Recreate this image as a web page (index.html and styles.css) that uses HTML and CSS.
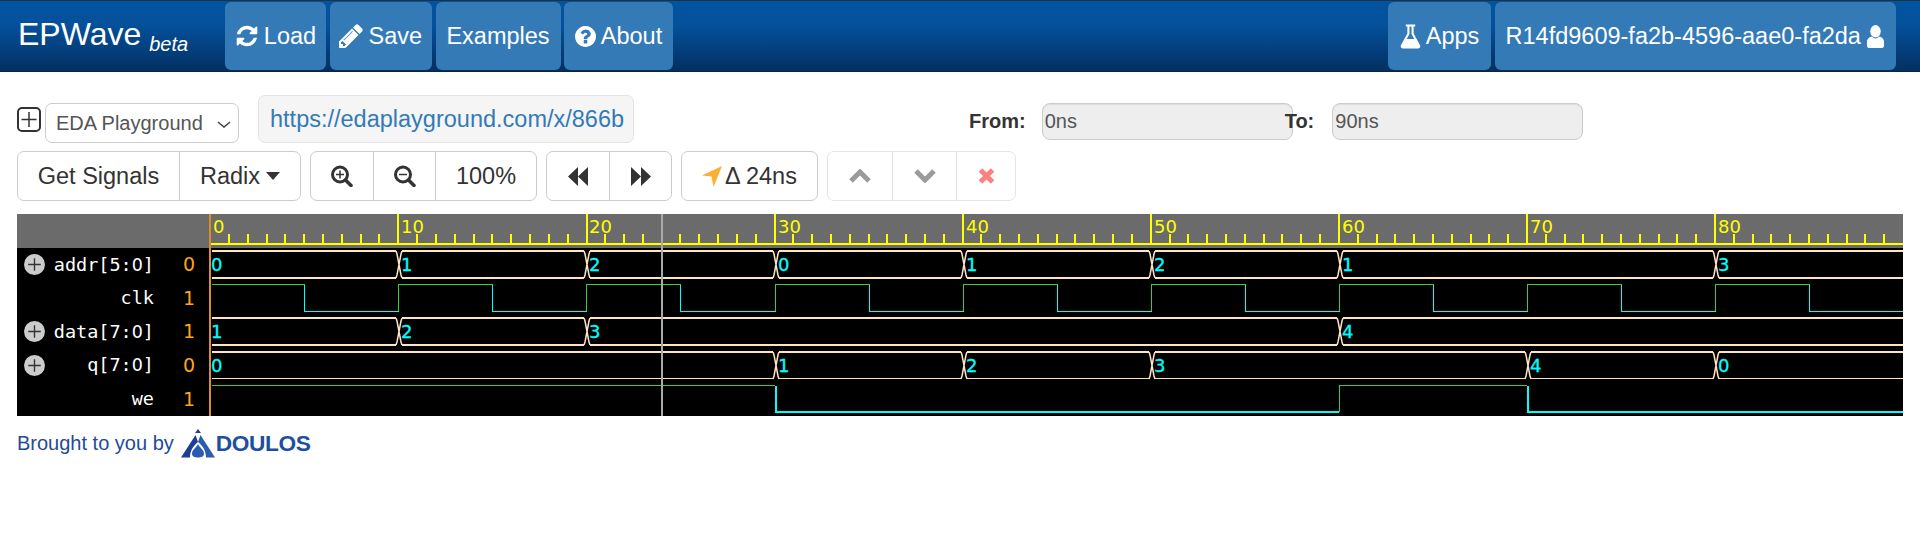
FILE: index.html
```html
<!DOCTYPE html>
<html lang="en">
<head>
<meta charset="utf-8">
<title>EPWave</title>
<link rel="stylesheet" href="styles.css">
</head>
<body>
<nav class="topbar">
  <div class="brand">EPWave <small>beta</small></div>
  <a class="nav-btn w-load"><svg class="ic-nav" viewBox="0 0 1792 1792"><path d="M1639 1056q0 5-1 7-64 268-268 434.5t-478 166.5q-146 0-282.5-55t-243.5-157l-129 129q-19 19-45 19t-45-19-19-45v-448q0-26 19-45t45-19h448q26 0 45 19t19 45-19 45l-137 137q71 66 161 102t187 36q134 0 250-65t186-179q11-17 53-117 8-23 30-23h192q13 0 22.5 9.5t9.5 22.5zm25-800v448q0 26-19 45t-45 19h-448q-26 0-45-19t-19-45 19-45l138-138q-148-137-349-137-134 0-250 65t-186 179q-11 17-53 117-8 23-30 23h-199q-13 0-22.5-9.5t-9.5-22.5v-7q65-268 270-434.5t480-166.5q146 0 284 55.5t245 156.5l130-129q19-19 45-19t45 19 19 45z"/></svg>Load</a>
  <a class="nav-btn w-save"><svg class="ic-nav" viewBox="0 0 1536 1536"><path d="M363 1408l91-91-235-235-91 91v107h128v128h107zm523-928q0-22-22-22-10 0-17 7l-542 542q-7 7-7 17 0 22 22 22 10 0 17-7l542-542q7-7 7-17zm-54-192l416 416-832 832h-416v-416zm683 96q0 53-37 90l-166 166-416-416 166-165q36-38 90-38 53 0 91 38l235 234q37 39 37 91z"/></svg>Save</a>
  <a class="nav-btn w-examples">Examples</a>
  <a class="nav-btn w-about"><svg class="ic-q" viewBox="128 128 1536 1536"><path d="M1024 1376v-192q0-14-9-23t-23-9h-192q-14 0-23 9t-9 23v192q0 14 9 23t23 9h192q14 0 23-9t9-23zm256-672q0-88-55.5-163t-138.5-116-170-41q-243 0-371 213-15 24 8 42l132 100q7 6 19 6 16 0 25-12 53-68 86-92 34-24 86-24 48 0 85.5 26t37.5 59q0 38-20 61t-68 45q-63 28-115.5 86.5t-52.5 125.5v36q0 14 9 23t23 9h192q14 0 23-9t9-23q0-19 21.5-49.5t54.5-49.5q32-18 49-28.5t46-35 44.5-48 28-60.5 12.5-81zm384 192q0 209-103 385.5t-279.5 279.5-385.5 103-385.5-103-279.5-279.5-103-385.5 103-385.5 279.5-279.5 385.5-103 385.5 103 279.5 279.5 103 385.5z"/></svg>About</a>
  <a class="nav-btn nav-right w-apps"><svg class="ic-flask" viewBox="0 0 20 24"><path fill-rule="evenodd" d="M5.500 .5h9v2h-1.500v6.500l6.200 11.500c.7 1.400-.1 3-1.700 3H2.500C.9 23.500 .1 21.900 .8 20.500L7 9V2.500H5.500zM9 2.500v7L6.400 14.500h7.200L11 9.500v-7z"/></svg>Apps</a>
  <a class="nav-btn w-user">R14fd9609-fa2b-4596-aae0-fa2da<svg class="ic-user" viewBox="0 0 20 24"><ellipse cx="10" cy="6.500" rx="5.500" ry="6.500"/><path d="M1 22v-4.500c0-3 2.500-5 5.500-5.500 1 1.300 2.200 2 3.500 2s2.500-.7 3.500-2c3 .5 5.500 2.500 5.500 5.500V22c0 1.100-.9 2-2 2H3c-1.100 0-2-.9-2-2z"/></svg></a>
</nav>

<main class="page">
  <div class="row-source">
    <svg class="ic-add" viewBox="0 0 24 25"><rect x="1" y="1" width="22" height="23" rx="4"/><path d="M12 5v15M4.500 12.500h15"/></svg>
    <div class="select-wrap">
      <select class="source-select"><option>EDA Playground</option></select>
      <svg class="select-chev" viewBox="0 0 14 7"><path d="M1 1l6 5 6-5"/></svg>
    </div>
    <div class="url-box"><a class="url-link">https://edaplayground.com/x/866b</a></div>
    <div class="range">
      <label class="range-label">From:</label>
      <input class="range-input" type="text" value="0ns" readonly>
      <label class="range-label range-to">To:</label>
      <input class="range-input" type="text" value="90ns" readonly>
    </div>
  </div>

  <div class="toolbar">
    <div class="btn-group">
      <button class="btn btn-text">Get Signals</button>
      <button class="btn btn-radix">Radix <svg class="ic-caret" viewBox="0 0 14 8"><path d="M0 0h14L7 8z"/></svg></button>
    </div>
    <div class="btn-group">
      <button class="btn btn-icon"><svg class="ic-zoom" viewBox="0 0 24 22"><circle cx="10" cy="9.500" r="7.500"/><path class="thin" d="M10 5.500v8M6 9.500h8"/><path class="handle" d="M15.500 15l5.500 5.500"/></svg></button>
      <button class="btn btn-icon"><svg class="ic-zoom" viewBox="0 0 24 22"><circle cx="10" cy="9.500" r="7.500"/><path class="thin" d="M6 9.500h8"/><path class="handle" d="M15.500 15l5.500 5.500"/></svg></button>
      <button class="btn btn-pct">100%</button>
    </div>
    <div class="btn-group">
      <button class="btn btn-icon"><svg class="ic-step" viewBox="0 0 20 19"><path d="M10 0v19L0 9.500zM20 0v19L10 9.500z"/></svg></button>
      <button class="btn btn-icon"><svg class="ic-step" viewBox="0 0 20 19"><path d="M0 0v19l10-9.500zM10 0v19l10-9.500z"/></svg></button>
    </div>
    <div class="btn-group">
      <button class="btn btn-delta"><svg class="ic-cursor" viewBox="0 0 19 20"><path d="M19 0L11 20 9 10 0 9z"/></svg>Δ 24ns</button>
    </div>
    <div class="btn-group is-disabled">
      <button class="btn btn-chev"><svg class="ic-chev" viewBox="0 0 22 14"><path d="M2 12l9-9 9 9"/></svg></button>
      <button class="btn btn-chev"><svg class="ic-chev" viewBox="0 0 22 14"><path d="M2 2l9 9 9-9"/></svg></button>
      <button class="btn btn-close"><svg class="ic-x" viewBox="0 0 17 16"><path d="M2.500 2l12 12M14.500 2l-12 12"/></svg></button>
    </div>
  </div>

  <section class="wave">
    <div class="signals">
      <div class="signals-head"></div>
      <div class="signal"><svg class="toggle" viewBox="0 0 20 20"><circle cx="10" cy="10" r="10"/><path d="M10 4v12M4 10h12"/></svg><span class="sig-name">addr[5:<span class="nz">0</span>]</span><span class="sig-val">0</span></div>
      <div class="signal"><span class="toggle-gap"></span><span class="sig-name">clk</span><span class="sig-val">1</span></div>
      <div class="signal"><svg class="toggle" viewBox="0 0 20 20"><circle cx="10" cy="10" r="10"/><path d="M10 4v12M4 10h12"/></svg><span class="sig-name">data[7:<span class="nz">0</span>]</span><span class="sig-val">1</span></div>
      <div class="signal"><svg class="toggle" viewBox="0 0 20 20"><circle cx="10" cy="10" r="10"/><path d="M10 4v12M4 10h12"/></svg><span class="sig-name">q[7:<span class="nz">0</span>]</span><span class="sig-val">0</span></div>
      <div class="signal"><span class="toggle-gap"></span><span class="sig-name">we</span><span class="sig-val">1</span></div>
    </div>
    <svg class="traces" viewBox="211 214 1692 202" width="1692" height="202">
      <defs>
        <path id="cross" d="M-2 0L-1 3L3 24L4 27M4 0L3 3L-1 24L-2 27"/>
        <path id="addr-h" d="M212 0H396M402 0H584M590 0H773M779 0H961M967 0H1149M1155 0H1337M1343 0H1713M1719 0H1903"/>
        <path id="data-h" d="M212 0H396M402 0H584M590 0H1337M1343 0H1903"/>
        <path id="q-h" d="M212 0H773M779 0H961M967 0H1149M1155 0H1525M1531 0H1713M1719 0H1903"/>
      </defs>
      <rect class="ruler-bg" x="211" y="214" width="1692" height="34"/>
      <path class="tick" d="M229 234V244M248 234V244M267 234V244M285 234V244M304 234V244M323 234V244M342 234V244M361 234V244M379 234V244M417 234V244M436 234V244M455 234V244M474 234V244M492 234V244M511 234V244M530 234V244M549 234V244M568 234V244M605 234V244M624 234V244M643 234V244M662 234V244M680 234V244M699 234V244M718 234V244M737 234V244M756 234V244M793 234V244M812 234V244M831 234V244M850 234V244M869 234V244M887 234V244M906 234V244M925 234V244M944 234V244M981 234V244M1000 234V244M1019 234V244M1038 234V244M1057 234V244M1075 234V244M1094 234V244M1113 234V244M1132 234V244M1170 234V244M1188 234V244M1207 234V244M1226 234V244M1245 234V244M1264 234V244M1282 234V244M1301 234V244M1320 234V244M1358 234V244M1377 234V244M1395 234V244M1414 234V244M1433 234V244M1452 234V244M1471 234V244M1489 234V244M1508 234V244M1546 234V244M1565 234V244M1583 234V244M1602 234V244M1621 234V244M1640 234V244M1659 234V244M1677 234V244M1696 234V244M1734 234V244M1753 234V244M1771 234V244M1790 234V244M1809 234V244M1828 234V244M1847 234V244M1865 234V244M1884 234V244M398 214V244M587 214V244M775 214V244M963 214V244M1151 214V244M1339 214V244M1527 214V244M1715 214V244"/>
      <path class="ruler-line" d="M211 244H1903"/>
      <text class="ruler-text" x="213" y="233">0</text>
      <text class="ruler-text" x="401" y="233">10</text>
      <text class="ruler-text" x="589" y="233">20</text>
      <text class="ruler-text" x="778" y="233">30</text>
      <text class="ruler-text" x="966" y="233">40</text>
      <text class="ruler-text" x="1154" y="233">50</text>
      <text class="ruler-text" x="1342" y="233">60</text>
      <text class="ruler-text" x="1530" y="233">70</text>
      <text class="ruler-text" x="1718" y="233">80</text>

      <g class="bus">
        <use href="#addr-h" y="251"/><use href="#addr-h" y="278"/>
        <use href="#data-h" y="318"/><use href="#data-h" y="345"/>
        <use href="#q-h" y="352"/>
      </g>
      <use class="bus-thin" href="#q-h" y="378.500"/>
      <g class="bus-x">
        <use href="#cross" x="398" y="251"/><use href="#cross" x="586" y="251"/><use href="#cross" x="775" y="251"/><use href="#cross" x="963" y="251"/><use href="#cross" x="1151" y="251"/><use href="#cross" x="1339" y="251"/><use href="#cross" x="1715" y="251"/>
        <use href="#cross" x="398" y="318"/><use href="#cross" x="586" y="318"/><use href="#cross" x="1339" y="318"/>
        <use href="#cross" x="775" y="352"/><use href="#cross" x="963" y="352"/><use href="#cross" x="1151" y="352"/><use href="#cross" x="1527" y="352"/><use href="#cross" x="1715" y="352"/>
      </g>
      <g class="bus-text">
        <text x="211" y="271">0</text><text x="401" y="271">1</text><text x="589" y="271">2</text><text x="778" y="271">0</text><text x="966" y="271">1</text><text x="1154" y="271">2</text><text x="1342" y="271">1</text><text x="1718" y="271">3</text>
        <text x="211" y="338">1</text><text x="401" y="338">2</text><text x="589" y="338">3</text><text x="1342" y="338">4</text>
        <text x="211" y="372">0</text><text x="778" y="372">1</text><text x="966" y="372">2</text><text x="1154" y="372">3</text><text x="1530" y="372">4</text><text x="1718" y="372">0</text>
      </g>

      <path class="hi" d="M212 284.500H305M398.500 311V284.500H493M586.500 311V284.500H681M775.500 311V284.500H870M963.500 311V284.500H1058M1151.500 311V284.500H1246M1339.500 311V284.500H1434M1527.500 311V284.500H1622M1715.500 311V284.500H1810"/>
      <path class="lo" d="M304.500 285V311.500H399M492.500 285V311.500H587M680.500 285V311.500H776M869.500 285V311.500H964M1057.500 285V311.500H1152M1245.500 285V311.500H1340M1433.500 285V311.500H1528M1621.500 285V311.500H1716M1809.500 285V311.500H1903"/>
      <path class="hi" d="M212 385.500H775M1339.500 412V385.500H1527"/>
      <path class="lo-thick" d="M775.500 386V412H1339M1527.500 386V412H1903"/>
      <path class="cursor" d="M662 214V416"/>
    </svg>
  </section>

  <footer class="credit">
    <span class="credit-text">Brought to you by</span>
    <svg class="logo-mark" viewBox="0 0 34 29"><path class="m1" d="M17 0l3 4h-6z"/><path class="m1" d="M14.500 6L0 28.500h9C9 22 12 17 17 13z"/><path class="m2" d="M19.500 6L34 28.500h-9C25 22 22 17 17 13z"/><path class="m2" d="M17 15c2 4 6 6 6 9.500 0 3-2.500 4-6 4s-6-1-6-4c0-3.500 4-5.500 6-9.500z"/></svg>
    <span class="logo-text">DOULOS</span>
  </footer>
</main>
</body>
</html>
```
FILE: styles.css
```css
* { box-sizing: border-box; }
html, body { margin: 0; background: #fff; }
body { font-family: "Liberation Sans", Arial, sans-serif; color: #333; overflow: hidden; }

/* top navigation */
.topbar {
  display: flex;
  align-items: stretch;
  gap: 3.5px;
  height: 72px;
  padding: 1px 24px 1px 0;
  border-top: 1px solid #26303a;
  border-bottom: 1px solid #10233d;
  background: linear-gradient(#0054a0 0%, #05509a 35%, #033a74 80%, #03305f 100%);
}
.brand {
  width: 221.5px;
  padding-left: 18px;
  align-self: center;
  font-size: 32px;
  line-height: 40px;
  color: #fff;
  white-space: nowrap;
}
.brand small { font-size: 20px; font-style: italic; position: relative; top: 6px; margin-left: -1px; }
.nav-btn {
  display: flex;
  align-items: center;
  justify-content: center;
  gap: 5px;
  border-radius: 6px;
  background: #337ab7;
  color: #fff;
  font-size: 23.5px;
  white-space: nowrap;
}
.nav-btn svg { fill: #fff; flex: none; }
.nav-right { margin-left: auto; }
.w-load { width: 101px; }
.w-save { width: 102.5px; }
.w-examples { width: 125px; }
.w-about { width: 109px; }
.w-apps { width: 103px; }
.w-user { width: 401.5px; }
.ic-nav { width: 24px; height: 24px; }
.ic-q { width: 21px; height: 21px; }
.ic-flask { width: 21px; height: 25px; }
.ic-user { width: 19px; height: 23px; }

/* page */
.page { padding: 23px 17px 0; }
.row-source { display: flex; align-items: flex-start; height: 48px; }
.ic-add { width: 24px; height: 25px; margin-top: 12px; flex: none; fill: none; stroke: #333; stroke-width: 2; }
.ic-add path { stroke-width: 1.5; }
.select-wrap { position: relative; width: 194px; height: 40px; margin: 8px 0 0 4px; flex: none; }
.source-select {
  display: block;
  width: 100%;
  height: 100%;
  padding: 0 5px 0 10px;
  border: 1px solid #ccc;
  border-radius: 7px;
  background: #fff;
  color: #555;
  font: 20px "Liberation Sans", Arial, sans-serif;
  appearance: none;
}
.select-chev { position: absolute; right: 8px; top: 18px; width: 14px; height: 7px; fill: none; stroke: #444; stroke-width: 1.6; pointer-events: none; }
.url-box {
  width: 376px;
  height: 48px;
  margin-left: 19px;
  padding-left: 11px;
  border: 1px solid #e3e3e3;
  border-radius: 7px;
  background: #f5f5f5;
  font-size: 23.5px;
  line-height: 46px;
}
.url-link { color: #337ab7; }
.range { display: flex; align-items: center; height: 37px; margin: 8px 0 0 335px; }
.range-label { font-size: 20px; font-weight: bold; margin-right: 16px; }
.range-to { margin-left: -8px; margin-right: 18px; }
.range-input {
  width: 251px;
  height: 37px;
  padding: 0 2px;
  border: 1px solid #ccc;
  border-radius: 8px;
  background: #eee;
  box-shadow: inset 0 1px 1px rgba(0, 0, 0, .075);
  color: #555;
  font: 20px "Liberation Sans", Arial, sans-serif;
  outline: none;
}

/* toolbar */
.toolbar { display: flex; gap: 9px; margin-top: 8px; height: 50px; }
.btn-group { display: flex; border: 1px solid #ccc; border-radius: 7px; background: #fff; }
.btn {
  display: flex;
  align-items: center;
  justify-content: center;
  height: 100%;
  padding: 0;
  border: 0;
  border-left: 1px solid #ccc;
  background: transparent;
  color: #333;
  font: 23.5px "Liberation Sans", Arial, sans-serif;
  white-space: nowrap;
}
.btn:first-child { border-left: 0; }
.btn-text { width: 161px; }
.btn-radix { width: 121px; gap: 6px; }
.btn-icon { width: 62px; }
.btn-pct { width: 101px; }
.btn-delta { width: 135px; gap: 3px; }
.btn-chev { width: 64px; }
.btn-close { width: 59px; }
.ic-caret { width: 14px; height: 8px; fill: #333; }
.ic-zoom { width: 24px; height: 22px; fill: none; stroke: #333; stroke-width: 3; }
.ic-zoom .thin { stroke-width: 1.5; }
.ic-zoom .handle { stroke-width: 3.5; stroke-linecap: round; }
.ic-step { width: 20px; height: 19px; fill: #333; }
.ic-cursor { width: 20px; height: 21px; fill: #fbb034; }
.is-disabled { border-color: #e5e5e5; }
.is-disabled .btn { border-left-color: #e5e5e5; }
.is-disabled .btn:first-child { border-left: 0; }
.ic-chev { width: 22px; height: 14px; fill: none; stroke: #9b9b9b; stroke-width: 5; }
.ic-x { width: 17px; height: 16px; fill: none; stroke: #fc8080; stroke-width: 5; }

/* waveform */
.wave { display: flex; margin-top: 13px; width: 1886px; height: 202px; background: #000; }
.signals { width: 194px; flex: none; border-right: 2px solid #d98f26; }
.signals-head { height: 34px; background: #6b6b6b; }
.signal { display: flex; align-items: center; height: 33.6px; padding: 0 14px 0 7px; color: #fff; font: 18.5px/1 "DejaVu Sans Mono", monospace; }
.toggle { width: 21px; height: 21px; flex: none; fill: #ccc; stroke: #333; stroke-width: 1.3; }
.toggle circle { stroke: none; }
.toggle-gap { width: 21px; flex: none; }
.sig-name { flex: 1; text-align: right; white-space: nowrap; }
.sig-val { width: 41px; text-align: right; color: #ffa31a; font-family: "DejaVu Sans", sans-serif; font-size: 19px; }
.nz { font-family: "DejaVu Sans", sans-serif; font-size: 17.5px; }
.traces { display: block; flex: none; }
.ruler-bg { fill: #6b6b6b; }
.tick { stroke: #ff0; stroke-width: 1.5; fill: none; shape-rendering: crispEdges; }
.ruler-line { stroke: #ff0; stroke-width: 2; fill: none; shape-rendering: crispEdges; }
.ruler-text { fill: #ff0; font: 18px "DejaVu Sans", sans-serif; }
.bus { stroke: #ffe4c4; stroke-width: 2; fill: none; shape-rendering: crispEdges; }
.bus-thin { stroke: #ffe4c4; stroke-width: 1; fill: none; shape-rendering: crispEdges; }
.bus-x { stroke: #ffe4c4; stroke-width: 1.5; fill: none; }
.bus-text { fill: #0ff; stroke: #0ff; stroke-width: .3; font: 18px "DejaVu Sans", sans-serif; }
.hi { stroke: #3ccc3c; stroke-width: 1; fill: none; shape-rendering: crispEdges; }
.lo { stroke: #0ff; stroke-width: 1; fill: none; shape-rendering: crispEdges; }
.lo-thick { stroke: #0ff; stroke-width: 2; fill: none; shape-rendering: crispEdges; }
.cursor { stroke: #aaa; stroke-width: 2; fill: none; shape-rendering: crispEdges; }

/* footer */
.credit { display: flex; align-items: center; height: 30px; margin-top: 12px; color: #1f4b99; }
.credit-text { font-size: 20px; }
.logo-mark { width: 34px; height: 29px; margin-left: 7px; flex: none; }
.m1 { fill: #1c3f94; }
.m2 { fill: #2a5db0; }
.logo-text { margin-left: 1px; font-size: 22.7px; font-weight: bold; letter-spacing: -.4px; color: #1e4f9c; }
```
